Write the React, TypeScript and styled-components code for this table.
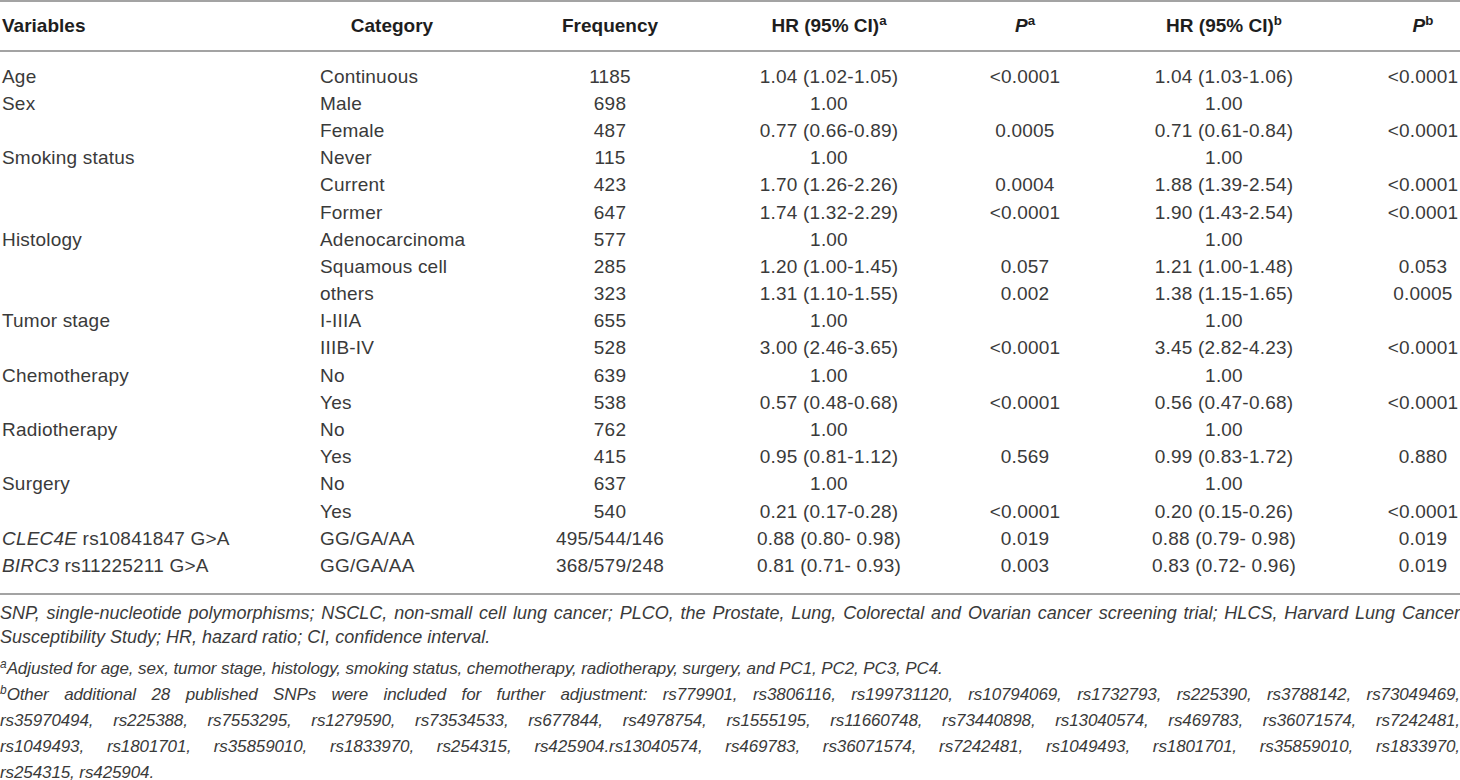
import React from "react";
import styled, { createGlobalStyle } from "styled-components";

const Global = createGlobalStyle`
  html, body { margin: 0; padding: 0; background: #ffffff; }
  body { font-family: "Liberation Sans", Arial, sans-serif; color: #2e2e2e; }
`;

const Page = styled.div`
  width: 1460px;
  display: flex;
  flex-direction: column;
`;

const COLS = "320px 144px 292px 146px 246px 152px 1fr";

const HeaderRow = styled.div`
  display: grid;
  grid-template-columns: ${COLS};
  align-items: center;
  height: 48px;
  border-top: 2px solid #a3a3a3;
  border-bottom: 2px solid #a3a3a3;
  font-size: 19px;
  font-weight: 700;
  color: #1e1e1e;
`;

const HeadCell = styled.div<{ $align?: "left" | "center"; $padLeft?: number }>`
  text-align: ${(p) => p.$align ?? "center"};
  padding-left: ${(p) => p.$padLeft ?? 0}px;
  white-space: nowrap;
`;

const Sup = styled.sup`
  font-size: 0.7em;
  line-height: 0;
  vertical-align: 0.5em;
`;

const ItalicP = styled.span`
  font-style: italic;
`;

const Body = styled.div`
  padding: 11px 0 13px;
  border-bottom: 2px solid #a3a3a3;
`;

const Row = styled.div`
  display: grid;
  grid-template-columns: ${COLS};
  height: 27.2px;
  align-items: center;
  font-size: 19px;
  letter-spacing: 0.2px;
  color: #3a3a3a;
`;

const Cell = styled.div<{ $align?: "left" | "center"; $padLeft?: number }>`
  text-align: ${(p) => p.$align ?? "center"};
  padding-left: ${(p) => p.$padLeft ?? 0}px;
  white-space: nowrap;
`;

const Gene = styled.i`
  font-style: italic;
`;

const Notes = styled.div`
  margin-top: 6px;
  font-size: 18px;
  font-style: italic;
  line-height: 24px;
  color: #3a3a3a;
`;

const CondensedNotes = styled.div`
  margin-top: 7px;
  font-size: 17px;
  font-style: italic;
  line-height: 26px;
  letter-spacing: -0.1px;
  color: #3a3a3a;
`;

const Line = styled.div<{ $justify?: boolean }>`
  text-align: ${(p) => (p.$justify ? "justify" : "left")};
  text-align-last: ${(p) => (p.$justify ? "justify" : "left")};
  white-space: ${(p) => (p.$justify ? "normal" : "nowrap")};
`;

const NoteSup = styled.sup`
  font-size: 0.7em;
  line-height: 0;
  vertical-align: 0.5em;
  letter-spacing: 0;
`;

type R = {
  v?: React.ReactNode;
  c: string;
  f: string;
  h1: string;
  p1?: string;
  h2: string;
  p2?: string;
};

const rows: R[] = [
  { v: "Age", c: "Continuous", f: "1185", h1: "1.04 (1.02-1.05)", p1: "<0.0001", h2: "1.04 (1.03-1.06)", p2: "<0.0001" },
  { v: "Sex", c: "Male", f: "698", h1: "1.00", h2: "1.00" },
  { c: "Female", f: "487", h1: "0.77 (0.66-0.89)", p1: "0.0005", h2: "0.71 (0.61-0.84)", p2: "<0.0001" },
  { v: "Smoking status", c: "Never", f: "115", h1: "1.00", h2: "1.00" },
  { c: "Current", f: "423", h1: "1.70 (1.26-2.26)", p1: "0.0004", h2: "1.88 (1.39-2.54)", p2: "<0.0001" },
  { c: "Former", f: "647", h1: "1.74 (1.32-2.29)", p1: "<0.0001", h2: "1.90 (1.43-2.54)", p2: "<0.0001" },
  { v: "Histology", c: "Adenocarcinoma", f: "577", h1: "1.00", h2: "1.00" },
  { c: "Squamous cell", f: "285", h1: "1.20 (1.00-1.45)", p1: "0.057", h2: "1.21 (1.00-1.48)", p2: "0.053" },
  { c: "others", f: "323", h1: "1.31 (1.10-1.55)", p1: "0.002", h2: "1.38 (1.15-1.65)", p2: "0.0005" },
  { v: "Tumor stage", c: "I-IIIA", f: "655", h1: "1.00", h2: "1.00" },
  { c: "IIIB-IV", f: "528", h1: "3.00 (2.46-3.65)", p1: "<0.0001", h2: "3.45 (2.82-4.23)", p2: "<0.0001" },
  { v: "Chemotherapy", c: "No", f: "639", h1: "1.00", h2: "1.00" },
  { c: "Yes", f: "538", h1: "0.57 (0.48-0.68)", p1: "<0.0001", h2: "0.56 (0.47-0.68)", p2: "<0.0001" },
  { v: "Radiotherapy", c: "No", f: "762", h1: "1.00", h2: "1.00" },
  { c: "Yes", f: "415", h1: "0.95 (0.81-1.12)", p1: "0.569", h2: "0.99 (0.83-1.72)", p2: "0.880" },
  { v: "Surgery", c: "No", f: "637", h1: "1.00", h2: "1.00" },
  { c: "Yes", f: "540", h1: "0.21 (0.17-0.28)", p1: "<0.0001", h2: "0.20 (0.15-0.26)", p2: "<0.0001" },
  {
    v: (
      <>
        <Gene>CLEC4E</Gene> rs10841847 G&gt;A
      </>
    ),
    c: "GG/GA/AA",
    f: "495/544/146",
    h1: "0.88 (0.80- 0.98)",
    p1: "0.019",
    h2: "0.88 (0.79- 0.98)",
    p2: "0.019",
  },
  {
    v: (
      <>
        <Gene>BIRC3</Gene> rs11225211 G&gt;A
      </>
    ),
    c: "GG/GA/AA",
    f: "368/579/248",
    h1: "0.81 (0.71- 0.93)",
    p1: "0.003",
    h2: "0.83 (0.72- 0.96)",
    p2: "0.019",
  },
];

export default function App() {
  return (
    <Page>
      <Global />
      <HeaderRow>
        <HeadCell $align="left" $padLeft={2}>Variables</HeadCell>
        <HeadCell>Category</HeadCell>
        <HeadCell>Frequency</HeadCell>
        <HeadCell>
          HR (95% CI)<Sup>a</Sup>
        </HeadCell>
        <HeadCell>
          <ItalicP>P</ItalicP>
          <Sup>a</Sup>
        </HeadCell>
        <HeadCell>
          HR (95% CI)<Sup>b</Sup>
        </HeadCell>
        <HeadCell $padLeft={86}>
          <ItalicP>P</ItalicP>
          <Sup>b</Sup>
        </HeadCell>
      </HeaderRow>
      <Body>
        {rows.map((r, i) => (
          <Row key={i}>
            <Cell $align="left" $padLeft={2}>{r.v ?? ""}</Cell>
            <Cell $align="left">{r.c}</Cell>
            <Cell>{r.f}</Cell>
            <Cell>{r.h1}</Cell>
            <Cell>{r.p1 ?? ""}</Cell>
            <Cell>{r.h2}</Cell>
            <Cell $padLeft={86}>{r.p2 ?? ""}</Cell>
          </Row>
        ))}
      </Body>
      <Notes>
        <Line $justify>
          SNP, single-nucleotide polymorphisms; NSCLC, non-small cell lung cancer; PLCO, the Prostate, Lung,
          Colorectal and Ovarian cancer screening trial; HLCS, Harvard Lung Cancer
        </Line>
        <Line>Susceptibility Study; HR, hazard ratio; CI, confidence interval.</Line>
      </Notes>
      <CondensedNotes>
        <Line>
          <NoteSup>a</NoteSup>Adjusted for age, sex, tumor stage, histology, smoking status, chemotherapy,
          radiotherapy, surgery, and PC1, PC2, PC3, PC4.
        </Line>
        <Line $justify>
          <NoteSup>b</NoteSup>Other additional 28 published SNPs were included for further adjustment: rs779901,
          rs3806116, rs199731120, rs10794069, rs1732793, rs225390, rs3788142, rs73049469,
        </Line>
        <Line $justify>
          rs35970494, rs225388, rs7553295, rs1279590, rs73534533, rs677844, rs4978754, rs1555195, rs11660748,
          rs73440898, rs13040574, rs469783, rs36071574, rs7242481,
        </Line>
        <Line $justify>
          rs1049493, rs1801701, rs35859010, rs1833970, rs254315, rs425904.rs13040574, rs469783, rs36071574,
          rs7242481, rs1049493, rs1801701, rs35859010, rs1833970,
        </Line>
        <Line>rs254315, rs425904.</Line>
      </CondensedNotes>
    </Page>
  );
}
